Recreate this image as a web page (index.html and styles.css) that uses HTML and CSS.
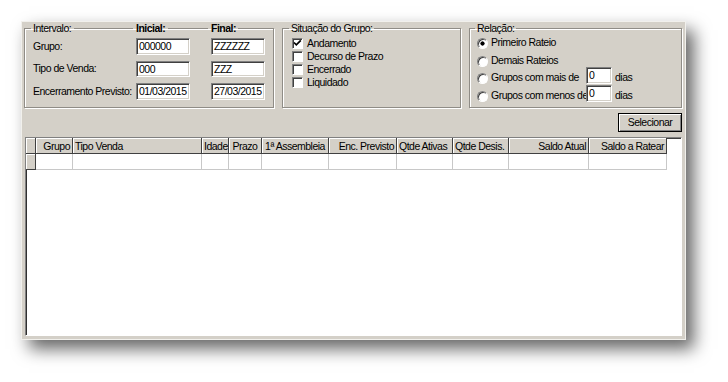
FILE: index.html
```html
<!DOCTYPE html>
<html lang="pt">
<head>
<meta charset="utf-8">
<title>Rateio</title>
<link rel="stylesheet" href="styles.css">
</head>
<body>
<div class="window">
  <div class="top">
    <fieldset class="box box-intervalo">
      <legend class="legend legend-cols">
        <span class="lcol lcol-1"><span class="ltext">Intervalo:</span><span class="lline"></span></span>
        <span class="lcol lcol-2"><span class="ltext bold">Inicial:</span><span class="lline"></span></span>
        <span class="lcol lcol-3"><span class="ltext bold">Final:</span></span>
      </legend>
      <div class="form">
        <span class="lbl">Grupo:</span><span class="field">000000</span><span class="field">ZZZZZZ</span>
        <span class="lbl">Tipo de Venda:</span><span class="field">000</span><span class="field">ZZZ</span>
        <span class="lbl">Encerramento Previsto:</span><span class="field">01/03/2015</span><span class="field">27/03/2015</span>
      </div>
    </fieldset>

    <fieldset class="box box-situacao">
      <legend class="legend"><span class="ltext">Situação do Grupo:</span></legend>
      <div class="checks">
        <div class="check"><span class="cb"><svg width="9" height="9" viewBox="0 0 9 9"><polyline points="1,3.5 3.3,5.8 7.8,1.3" fill="none" stroke="#000" stroke-width="1.7"/></svg></span><span>Andamento</span></div>
        <div class="check"><span class="cb"></span><span>Decurso de Prazo</span></div>
        <div class="check"><span class="cb"></span><span>Encerrado</span></div>
        <div class="check"><span class="cb"></span><span>Liquidado</span></div>
      </div>
    </fieldset>

    <fieldset class="box box-relacao">
      <legend class="legend"><span class="ltext">Relação:</span></legend>
      <div class="radios">
        <div class="opt opt-first"><span class="rb rb-on"></span><span class="otext">Primeiro Rateio</span></div>
        <div class="opt"><span class="rb"></span><span class="otext">Demais Rateios</span></div>
        <div class="opt"><span class="rb"></span><span class="otext otext-fixed">Grupos com mais de</span><span class="field field-sm">0</span><span class="dias">dias</span></div>
        <div class="opt"><span class="rb"></span><span class="otext otext-fixed">Grupos com menos de</span><span class="field field-sm">0</span><span class="dias">dias</span></div>
      </div>
    </fieldset>
  </div>

  <div class="actions">
    <span class="btn">Selecionar</span>
  </div>

  <div class="grid">
    <table class="tbl">
      <colgroup>
        <col style="width:10px"><col style="width:37px"><col style="width:129px"><col style="width:27px"><col style="width:33px"><col style="width:67px"><col style="width:68px"><col style="width:56px"><col style="width:56px"><col style="width:80px"><col style="width:78px">
      </colgroup>
      <thead>
        <tr>
          <th class="ind"></th>
          <th class="r">Grupo</th>
          <th>Tipo Venda</th>
          <th>Idade</th>
          <th class="c">Prazo</th>
          <th class="c">1ª Assembleia</th>
          <th class="r">Enc. Previsto</th>
          <th>Qtde Ativas</th>
          <th>Qtde Desis.</th>
          <th class="r">Saldo Atual</th>
          <th class="r">Saldo a Ratear</th>
        </tr>
      </thead>
      <tbody>
        <tr>
          <td class="ind"></td>
          <td></td><td></td><td></td><td></td><td></td><td></td><td></td><td></td><td></td><td></td>
        </tr>
      </tbody>
    </table>
  </div>
</div>
</body>
</html>
```

FILE: styles.css
```css
* { box-sizing: border-box; }

html, body {
  margin: 0;
  padding: 0;
  background: #ffffff;
}

body {
  font-family: "Liberation Sans", Arial, sans-serif;
  font-size: 10.5px;
  letter-spacing: -0.5px;
  color: #000;
  min-height: 382px;
  padding: 21px 0 0 21px;
}

.window {
  width: 665px;
  height: 319px;
  background: #d4d0c8;
  border: 1px solid #f1f0ec;
  padding: 0 3px 3px 2px;
  display: flex;
  flex-direction: column;
  box-shadow: 8px 9px 16px rgba(0, 0, 0, 0.6);
}

.top {
  display: flex;
  column-gap: 8px;
  height: 86px;
}

.box {
  margin: 0;
  min-width: 0;
  border: 1px solid #8f8c86;
  box-shadow: inset 1px 1px 0 #ffffff, 1px 1px 0 #ffffff;
  padding: 0;
}

.box-intervalo { width: 250px; padding-left: 8px; }
.box-situacao { width: 179px; padding-left: 9px; }
.box-relacao { width: 213px; padding-left: 7px; }

.legend {
  padding: 0;
  line-height: 13px;
  height: 13px;
}

.box-intervalo .legend { margin-left: -2px; }
.box-situacao .legend { margin-left: -3px; }
.box-relacao .legend { margin-left: -2px; }

.ltext {
  padding: 0 2px;
  white-space: nowrap;
}

.bold { font-weight: bold; }

.legend-cols {
  display: grid;
  grid-template-columns: 103px 75px auto;
  align-items: center;
}

.lcol {
  display: flex;
  align-items: center;
}

.lline {
  flex: 1;
  height: 0;
  border-top: 1px solid #8f8c86;
  box-shadow: 0 1px 0 #ffffff;
  margin: 0 1px;
}

/* Intervalo form */
.form {
  display: grid;
  grid-template-columns: 103px 75px 54px;
  grid-auto-rows: 16.5px;
  row-gap: 6px;
  padding-top: 3px;
  align-items: center;
}

.lbl {
  white-space: nowrap;
  line-height: 13px;
}

.field {
  display: block;
  width: 54px;
  height: 16.5px;
  background: #ffffff;
  border-style: solid;
  border-width: 1px;
  border-color: #808080 #ffffff #ffffff #808080;
  box-shadow: inset 1px 1px 0 #404040, inset -1px -1px 0 #d4d0c8;
  padding: 0 2px;
  line-height: 14.5px;
  white-space: nowrap;
  overflow: hidden;
}

/* Situação checkboxes */
.checks {
  padding-top: 2px;
  display: flex;
  flex-direction: column;
}

.check {
  height: 13px;
  display: flex;
  align-items: center;
  column-gap: 4px;
  line-height: 13px;
}

.cb {
  width: 11px;
  height: 11px;
  flex: none;
  background: #ffffff;
  border-style: solid;
  border-width: 1px;
  border-color: #808080 #ffffff #ffffff #808080;
  box-shadow: inset 1px 1px 0 #404040;
  display: flex;
  align-items: center;
  justify-content: center;
}

.cb svg { display: block; }

/* Relação radios */
.radios {
  display: flex;
  flex-direction: column;
}

.opt {
  height: 17.5px;
  display: flex;
  align-items: flex-end;
  white-space: nowrap;
  line-height: 13px;
}

.opt-first { height: 14px; }

.rb {
  width: 11px;
  height: 11px;
  flex: none;
  border-radius: 50%;
  border: 1px solid;
  border-color: #808080 #ffffff #ffffff #808080;
  background: #ffffff;
  box-shadow: inset 1px 1px 0 #404040;
  margin-right: 3px;
}

.rb-on {
  background: radial-gradient(circle at 50% 50%, #000 0, #000 1.8px, #ffffff 2.4px);
}

.otext { line-height: 13px; }
.otext-fixed { width: 95px; }

.field-sm {
  width: 26px;
  height: 17px;
  padding: 0 2px;
}

.dias {
  margin-left: 3px;
  line-height: 13px;
}

/* Button */
.actions {
  display: flex;
  justify-content: flex-end;
  margin-top: 5px;
}

.btn {
  display: flex;
  align-items: center;
  justify-content: center;
  width: 64px;
  height: 19px;
  border: 1px solid #000000;
  background: #d4d0c8;
  box-shadow: inset 1px 1px 0 #ffffff, inset -1px -1px 0 #808080;
  padding-bottom: 1px;
}

/* Grid */
.grid {
  flex: 1;
  margin-top: 5px;
  margin-left: 1px;
  background: #ffffff;
  border-style: solid;
  border-width: 1px;
  border-color: #808080 #ffffff #ffffff #808080;
  box-shadow: inset 1px 0 0 #303030, inset 0 1px 0 #404040;
  overflow: hidden;
}

.tbl {
  border-collapse: separate;
  border-spacing: 0;
  table-layout: fixed;
  width: 641px;
  font-size: 10.5px;
}

.tbl th {
  height: 16px;
  padding: 0 2px;
  font-weight: normal;
  text-align: left;
  white-space: nowrap;
  overflow: hidden;
  background: #d4d0c8;
  border-right: 1px solid #404040;
  border-bottom: 1px solid #404040;
  box-shadow: inset 1px 1px 0 #ffffff;
  line-height: 14px;
}

.tbl th.r { text-align: right; }
.tbl th.c { text-align: center; }

.tbl td {
  height: 16px;
  padding: 0;
  border-right: 1px solid #c8c8c8;
  border-bottom: 1px solid #c8c8c8;
}

.tbl td.ind {
  background: #d4d0c8;
  border-right: 1px solid #404040;
  border-bottom: 1px solid #404040;
  box-shadow: inset 1px 1px 0 #ffffff;
}
```
